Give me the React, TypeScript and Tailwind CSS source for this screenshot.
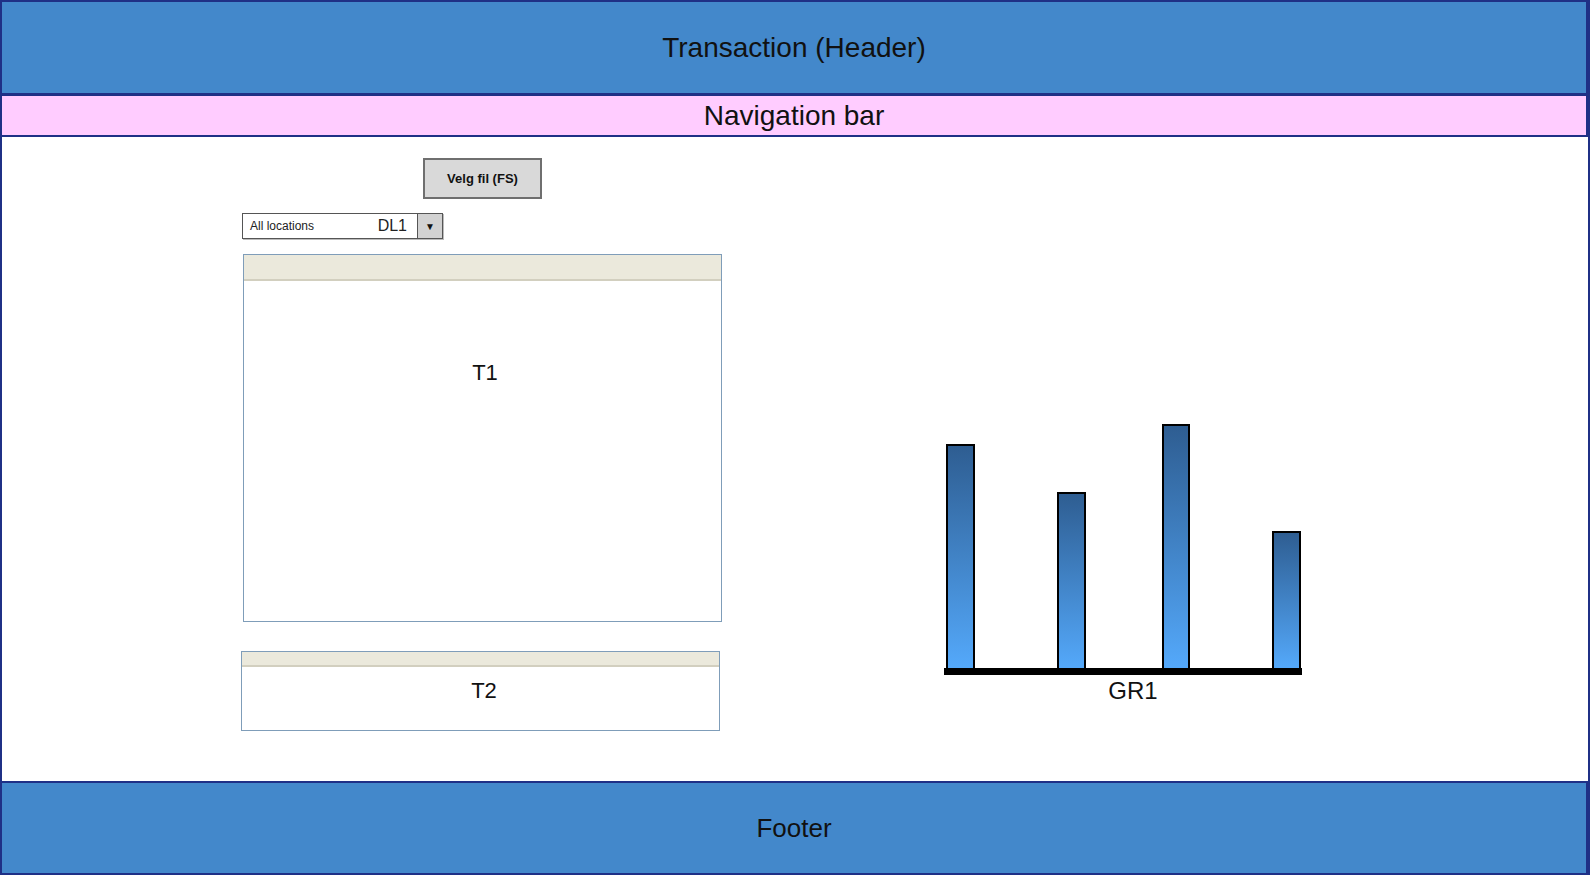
const bars = [
  { x: 3, y: 21, w: 27, h: 224 },
  { x: 114, y: 69, w: 27, h: 176 },
  { x: 219, y: 1, w: 26, h: 244 },
  { x: 329, y: 108, w: 27, h: 137 },
];

function BarChart() {
  return (
    <div className="flex flex-col w-[358px]">
      <svg width="358" height="251" viewBox="0 0 358 251">
        <defs>
          <linearGradient id="barFill" x1="0" y1="0" x2="0" y2="1">
            <stop offset="0%" stopColor="#2e5d91" />
            <stop offset="100%" stopColor="#54a9fb" />
          </linearGradient>
        </defs>
        {bars.map((b, i) => (
          <rect
            key={i}
            x={b.x}
            y={b.y}
            width={b.w}
            height={b.h}
            fill="url(#barFill)"
            stroke="#000"
            strokeWidth="2"
          />
        ))}
        <rect x="0" y="244" width="358" height="7" fill="#000" />
      </svg>
      <div className="mt-[4px] pl-[20px] text-center text-[24px] leading-none text-[#111]">GR1</div>
    </div>
  );
}

function Table({ headerH, label, bodyClass }: { headerH: string; label: string; bodyClass: string }) {
  return (
    <div className="border border-[#7f9db9] bg-white w-[479px]">
      <div className={`${headerH} bg-[#ebe9dc] border-b-2 border-[#d2cfbf]`} />
      <div className={bodyClass}>
        <div className="text-center text-[22px] leading-none text-[#111]">{label}</div>
      </div>
    </div>
  );
}

export default function App() {
  return (
    <div
      className="w-[1590px] h-[875px] border-2 border-[#1f3086] flex flex-col bg-white text-black"
      style={{ fontFamily: '"Liberation Sans", Arial, sans-serif' }}
    >
      <header className="h-[94px] shrink-0 bg-[#4388cb] border-b-[3px] border-r-2 border-[#1f3086] flex items-center justify-center">
        <h1 className="text-[28px] text-[#111]">Transaction (Header)</h1>
      </header>

      <nav className="h-[41px] shrink-0 bg-[#ffccff] border-b-2 border-r-2 border-[#1f3086] flex items-center justify-center">
        <span className="text-[28px] text-[#111]">Navigation bar</span>
      </nav>

      <main className="flex-1 flex pl-[239px] pt-[21px]">
        <div className="w-[481px] flex flex-col">
          <div className="flex justify-center pl-[2px]">
            <button className="w-[119px] h-[41px] bg-[#d9d9d9] border-2 border-[#6f6f6f] text-[13px] font-bold text-[#111]">
              Velg fil (FS)
            </button>
          </div>

          <div className="mt-[14px] ml-[1px] w-[201px] h-[26px] border border-[#555] flex items-center bg-white shadow-[1px_1px_0_#bbb]">
            <span className="pl-[7px] text-[12px] text-[#222] flex-1">All locations</span>
            <span className="text-[16px] text-[#222] pr-[10px]">DL1</span>
            <div className="w-[25px] h-full border-l border-[#555] bg-[#d2d2d2] flex items-center justify-center text-[10px] text-[#111]">
              ▼
            </div>
          </div>

          <div className="mt-[15px] ml-[2px]">
            <Table headerH="h-[26px]" label="T1" bodyClass="h-[340px] pt-[81px] pl-[5px]" />
          </div>

          <div className="mt-[29px]">
            <Table headerH="h-[15px]" label="T2" bodyClass="h-[63px] pt-[13px] pl-[7px]" />
          </div>
        </div>

        <div className="ml-[222px] pt-[266px]">
          <BarChart />
        </div>
      </main>

      <footer className="h-[92px] shrink-0 bg-[#4388cb] border-t-2 border-r-2 border-[#1f3086] flex items-center justify-center">
        <span className="text-[26px] text-[#111]">Footer</span>
      </footer>
    </div>
  );
}
